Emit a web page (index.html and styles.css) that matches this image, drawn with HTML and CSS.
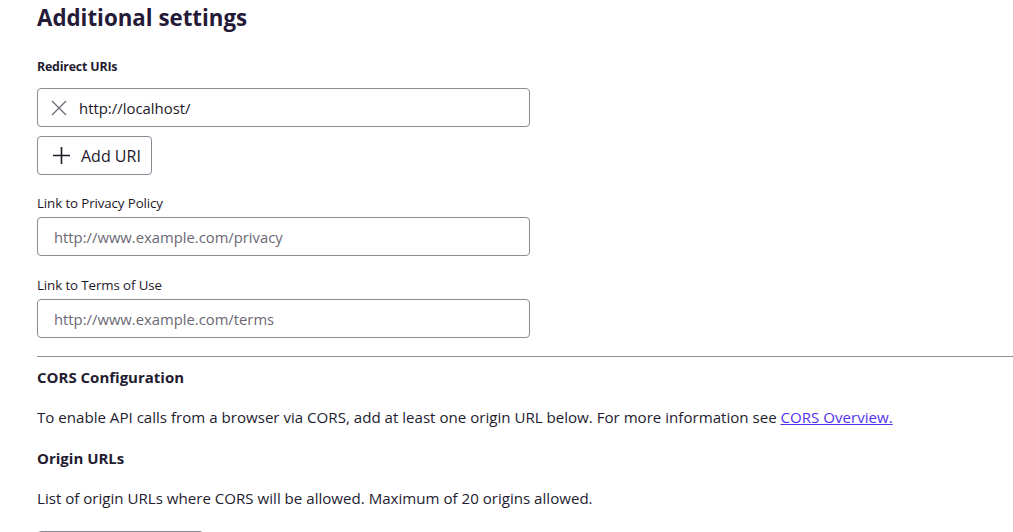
FILE: index.html
```html
<!DOCTYPE html>
<html>
<head>
<meta charset="utf-8">
<link rel="stylesheet" href="styles.css">
</head>
<body>
<main class="page">
  <h1 class="title">Additional settings</h1>

  <section class="field">
    <div class="label">Redirect URIs</div>
    <div class="input uri">
      <svg class="x-icon" width="16" height="16" viewBox="0 0 16 16"><path d="M1 1L15 15M15 1L1 15" stroke="#6e6b78" stroke-width="1.3" fill="none"/></svg>
      <span class="uri-text">http://localhost/</span>
    </div>
    <button class="btn">
      <svg width="19" height="19" viewBox="0 0 19 19"><path d="M9.5 1V18M1 9.5H18" stroke="#1d1828" stroke-width="1.6" fill="none"/></svg>
      <span>Add URI</span>
    </button>
  </section>

  <section class="field">
    <div class="label light">Link to Privacy Policy</div>
    <div class="input"><span class="placeholder">http://www.example.com/privacy</span></div>
  </section>

  <section class="field">
    <div class="label light">Link to Terms of Use</div>
    <div class="input"><span class="placeholder">http://www.example.com/terms</span></div>
  </section>

  <hr class="divider">

  <h2 class="sub">CORS Configuration</h2>
  <p class="text">To enable API calls from a browser via CORS, add at least one origin URL below. For more information see <a href="#" class="link">CORS Overview.</a></p>
  <h2 class="sub">Origin URLs</h2>
  <p class="text">List of origin URLs where CORS will be allowed. Maximum of 20 origins allowed.</p>
  <div class="input small"></div>
</main>
</body>
</html>
```

FILE: styles.css
```css
html, body {
  margin: 0;
  padding: 0;
  background: #ffffff;
}
body {
  font-family: "Open Sans", "Noto Sans", sans-serif;
  color: #231c30;
  overflow: hidden;
  height: 532px;
}
.page {
  padding: 3px 0 0 37px;
}
.title {
  margin: 0;
  font-size: 22.3px;
  font-weight: 700;
  line-height: 30px;
  color: #251a38;
}
.field {
  width: 493px;
  display: flex;
  flex-direction: column;
  align-items: flex-start;
}
.field:first-of-type {
  margin-top: 26px;
}
.label {
  font-size: 12.4px;
  font-weight: 700;
  line-height: 16px;
  margin-bottom: 13px;
  letter-spacing: -0.2px;
}
.label.light {
  font-weight: 500;
  font-size: 13.3px;
  margin-top: 21px;
  margin-bottom: 6px;
  letter-spacing: -0.1px;
  color: #1d1828;
}
.btn + .label.light,
.field:nth-of-type(2) .label.light {
  margin-top: 20px;
}
.input {
  box-sizing: border-box;
  width: 493px;
  height: 39px;
  border: 1px solid #8d8a96;
  border-radius: 4px;
  display: flex;
  align-items: center;
  padding-left: 16px;
}
.input.uri {
  padding-left: 13px;
  gap: 12px;
}
.uri-text {
  font-size: 14.9px;
  color: #1d1828;
}
.placeholder {
  font-size: 14.8px;
  color: #6b6873;
}
.btn {
  margin-top: 9px;
  box-sizing: border-box;
  height: 39px;
  width: 115px;
  border: 1px solid #8d8a96;
  border-radius: 4px;
  background: #fff;
  display: flex;
  align-items: center;
  gap: 10px;
  padding: 0 0 0 14px;
  font-family: inherit;
  font-size: 16px;
  color: #1d1828;
}
.divider {
  margin: 18px 0 0 0;
  border: none;
  border-top: 1px solid #8f8f8f;
}
.sub {
  margin: 10px 0 0 0;
  font-size: 15px;
  font-weight: 700;
  line-height: 20px;
}
.text {
  margin: 20px 0 0 0;
  font-size: 15.1px;
  line-height: 20px;
}
.text + .sub {
  margin-top: 21px;
}
.link {
  color: #5232f0;
}
.input.small {
  margin-top: 23px;
  width: 167px;
}
```
